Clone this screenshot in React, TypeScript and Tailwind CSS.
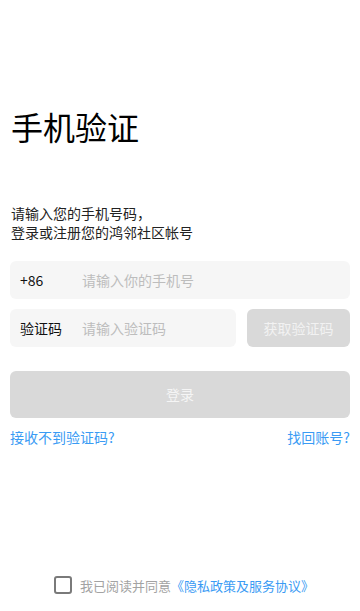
import React, { useState } from "react";

const font = { fontFamily: '"Noto Sans CJK SC", "Noto Sans", sans-serif' };

const App: React.FC = () => {
  const [agreed, setAgreed] = useState(false);

  return (
    <div className="w-[360px] h-[611px] bg-white flex flex-col px-[10px]" style={font}>
      <h1 className="mt-[107px] pl-[1px] text-[32px] leading-[38px] text-black font-normal">
        手机验证
      </h1>

      <p className="mt-[59px] pl-[1px] text-[14px] leading-[19px] text-[#222]">
        请输入您的手机号码，
        <br />
        登录或注册您的鸿邻社区帐号
      </p>

      <div className="mt-[19px] h-[38px] rounded-[6px] bg-[#f6f6f6] flex items-center">
        <span className="w-[72px] pl-[10px] text-[14px] text-[#111]">+86</span>
        <span className="text-[14px] text-[#bdbdbd]">请输入你的手机号</span>
      </div>

      <div className="mt-[10px] flex gap-[11px]">
        <div className="flex-1 h-[38px] rounded-[6px] bg-[#f6f6f6] flex items-center">
          <span className="w-[72px] pl-[10px] text-[14px] text-[#111]">验证码</span>
          <span className="text-[14px] text-[#bdbdbd]">请输入验证码</span>
        </div>
        <button className="w-[103px] h-[38px] rounded-[6px] bg-[#d9d9d9] text-[14px] text-[#f2f2f2]">
          获取验证码
        </button>
      </div>

      <button className="mt-[24px] h-[47px] rounded-[6px] bg-[#d9d9d9] text-[14px] text-[#f5f5f5]">
        登录
      </button>

      <div className="mt-[9px] flex justify-between text-[14px] leading-[20px] text-[#3a9bf4]">
        <span>接收不到验证码?</span>
        <span>找回账号?</span>
      </div>

      <div className="mt-auto mb-[16px] pl-[8px] flex items-center justify-center gap-[8px]">
        <button
          onClick={() => setAgreed(!agreed)}
          className="w-[18px] h-[18px] rounded-[3px] border-2 border-[#7a7a7a] bg-white"
        />
        <span className="text-[13px] text-[#a3a3a3]">
          我已阅读并同意<span className="text-[#3a9bf4]">《隐私政策及服务协议》</span>
        </span>
      </div>
    </div>
  );
};

export default App;
